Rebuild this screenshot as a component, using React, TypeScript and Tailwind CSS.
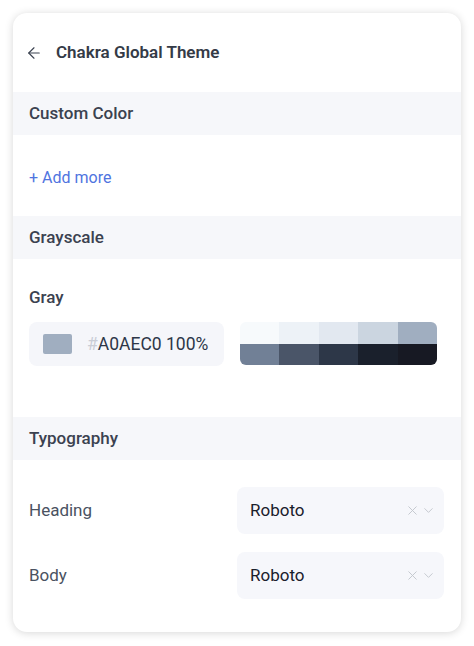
import React from "react";
import { ArrowLeft, ChevronDown, X } from "lucide-react";

const grays = [
  "#F7FAFC",
  "#EDF2F7",
  "#E2E8F0",
  "#CBD5E0",
  "#A0AEC0",
  "#718096",
  "#4A5568",
  "#2D3748",
  "#1A202C",
  "#171923",
];

const SectionBar = ({ title }: { title: string }) => (
  <div className="h-[43px] bg-[#f6f7fa] flex items-center px-4">
    <span className="text-[17px] font-medium text-[#3b4250]">{title}</span>
  </div>
);

const FontSelect = ({ label }: { label: string }) => (
  <div className="flex items-center justify-between">
    <span className="text-[17px] text-[#4a5261]">{label}</span>
    <div className="w-[207px] h-[47px] rounded-lg bg-[#f6f7fb] flex items-center pl-[13px] pr-[8px]">
      <span className="flex-1 text-[17px] text-[#1a202c]">Roboto</span>
      <X size={15} strokeWidth={1.5} className="text-[#c2c6cd]" />
      <ChevronDown size={15} strokeWidth={1.5} className="text-[#c2c6cd] ml-[1px]" />
    </div>
  </div>
);

export default function App() {
  return (
    <div
      className="w-[474px] h-[646px] bg-white pt-[13px] pl-[13px]"
      style={{ fontFamily: "Roboto, 'Liberation Sans', sans-serif" }}
    >
      <div className="w-[448px] h-[619px] rounded-[14px] bg-white shadow-[0_1px_8px_rgba(0,0,0,0.16)] overflow-hidden flex flex-col">
        {/* Header */}
        <div className="h-[79px] flex items-center pl-[12px]">
          <ArrowLeft size={18} strokeWidth={1.5} className="text-[#3b4250]" />
          <span className="ml-[13px] text-[17px] font-semibold text-[#343b47]">
            Chakra Global Theme
          </span>
        </div>

        <SectionBar title="Custom Color" />
        <div className="h-[81px] flex items-center px-4 pt-[5px]">
          <span className="text-[16px] text-[#4f74df]">+ Add more</span>
        </div>

        <SectionBar title="Grayscale" />
        <div className="h-[158px] px-4 pt-[27px]">
          <div className="text-[17px] font-medium text-[#3b4250] leading-[22px]">Gray</div>
          <div className="mt-[14px] flex gap-4">
            <div className="w-[195px] h-[44px] rounded-lg bg-[#f5f6fa] flex items-center pl-[14px]">
              <div className="w-[29px] h-[20px] rounded-[2px] bg-[#A0AEC0]" />
              <span className="ml-[15px] text-[17.5px] text-[#2d3748]">
                <span className="text-[#c9cdd6]">#</span>A0AEC0 100%
              </span>
            </div>
            <div className="w-[197px] h-[43px] rounded-md overflow-hidden grid grid-cols-5 grid-rows-2">
              {grays.map((c) => (
                <div key={c} style={{ backgroundColor: c }} />
              ))}
            </div>
          </div>
        </div>

        <SectionBar title="Typography" />
        <div className="pt-[27px] pl-4 pr-[17px] flex flex-col gap-[18px]">
          <FontSelect label="Heading" />
          <FontSelect label="Body" />
        </div>
      </div>
    </div>
  );
}
